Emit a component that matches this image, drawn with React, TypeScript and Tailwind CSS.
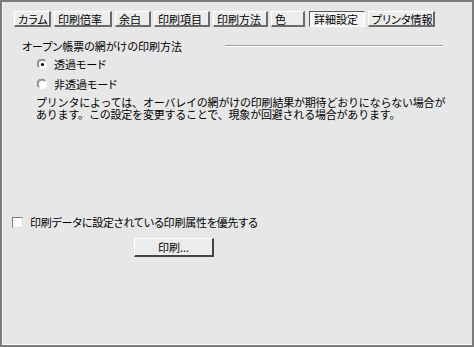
import React from "react";

const tabs = [
  { label: "カラム", w: 37 },
  { label: "印刷倍率", w: 58 },
  { label: "余白", w: 36 },
  { label: "印刷項目", w: 56 },
  { label: "印刷方法", w: 55 },
  { label: "色", w: 34 },
  { label: "詳細設定", w: 56, active: true },
  { label: "プリンタ情報", w: 67 },
];

function Radio({ checked }: { checked?: boolean }) {
  return (
    <svg width="11" height="11" viewBox="0 0 11 11" className="shrink-0">
      <circle cx="5.5" cy="5.5" r="4.5" fill="#ffffff" />
      <path d="M1.3 8 A4.5 4.5 0 0 1 8 1.3" fill="none" stroke="#7a7a7a" strokeWidth="1" />
      <path d="M2.2 8.2 A3.6 3.6 0 0 1 8.2 2.2" fill="none" stroke="#3a3a3a" strokeWidth="0.8" />
      {checked && <circle cx="5.5" cy="5.5" r="1.6" fill="#000000" />}
    </svg>
  );
}

export default function App() {
  return (
    <div
      className="w-[474px] h-[347px] border-2 border-[#7c7c7c] bg-[#e7e7e7] text-black text-[11px] leading-[12px] [font-feature-settings:'palt']"
      style={{ fontFamily: '"Noto Sans CJK JP", "Noto Sans", sans-serif' }}
    >
      <div className="h-full w-full border-l border-b border-[#fafafa] flex flex-col">
        <div className="flex gap-[3px] pl-[11px] mt-[9px]">
          {tabs.map((t) => (
            <div
              key={t.label}
              style={{ width: t.w }}
              className={
                t.active
                  ? "ml-[1px] h-[16px] flex items-center pl-[4px] bg-[#f5f5f5] border-t border-l border-[#5a5a5a] border-r border-b border-r-white border-b-white whitespace-nowrap"
                  : "h-[16px] flex items-center pl-[3px] bg-[#ececec] border-t border-l border-white border-r-2 border-b-2 border-r-[#6a6a6a] border-b-[#6a6a6a] whitespace-nowrap"
              }
            >
              {t.label}
            </div>
          ))}
        </div>

        <div className="flex items-center mt-[13px] pl-[19px] pr-[29px]">
          <span className="whitespace-nowrap">オープン帳票の網がけの印刷方法</span>
          <div className="flex-1 ml-[43px] flex flex-col">
            <div className="h-px bg-[#a0a0a0]" />
            <div className="h-px bg-white" />
          </div>
        </div>

        <div className="flex items-center gap-[6px] mt-[6px] pl-[34px]">
          <Radio checked />
          <span>透過モード</span>
        </div>
        <div className="flex items-center gap-[6px] mt-[8px] pl-[34px]">
          <Radio />
          <span>非透過モード</span>
        </div>

        <div className="mt-[6px] pl-[33px] whitespace-nowrap [font-feature-settings:normal] tracking-[-0.2px]">
          <div>プリンタによっては、オーバレイの網がけの印刷結果が期待どおりにならない場合が</div>
          <div>あります。この設定を変更することで、現象が回避される場合があります。</div>
        </div>

        <div className="flex items-center gap-[7px] mt-[96px] pl-[9px]">
          <div className="w-[11px] h-[11px] bg-white border-t border-l border-[#7a7a7a] border-r border-b border-r-[#dcdcdc] border-b-[#dcdcdc]" />
          <span className="whitespace-nowrap tracking-[-0.2px]">印刷データに設定されている印刷属性を優先する</span>
        </div>

        <div className="mt-[10px] pl-[131px]">
          <div className="w-[80px] h-[19px] flex items-center justify-center bg-[#ececec] border-t border-l border-white border-r-2 border-b-2 border-r-[#444444] border-b-[#444444]">
            印刷...
          </div>
        </div>
      </div>
    </div>
  );
}
